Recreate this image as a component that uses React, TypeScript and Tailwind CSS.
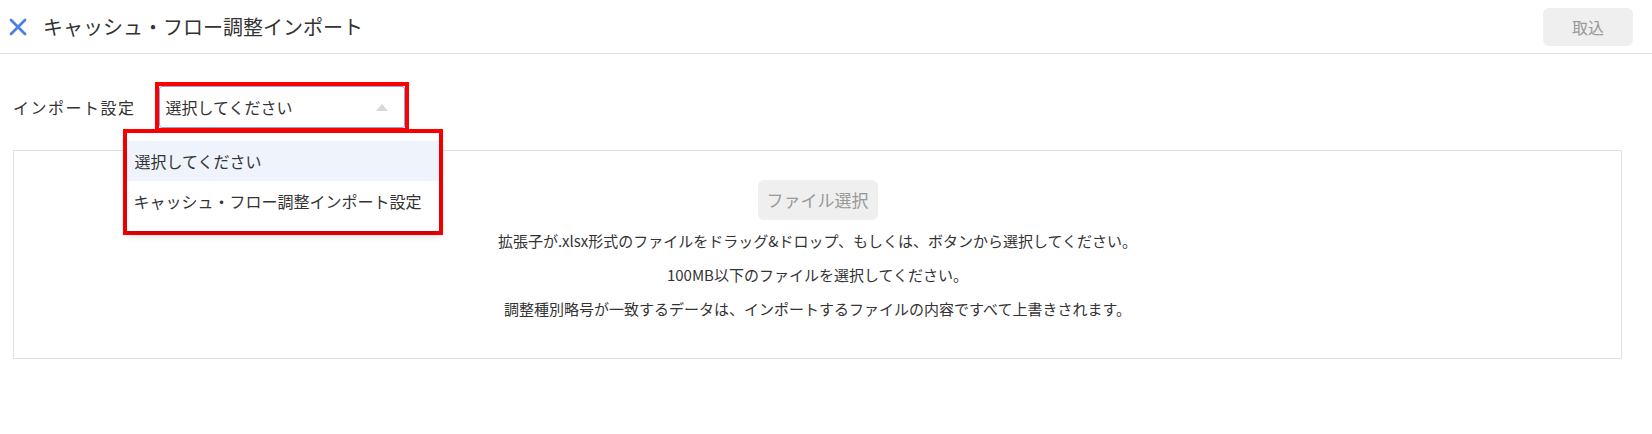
import React from 'react';

const font = { fontFamily: '"Noto Sans CJK JP", "Noto Sans", sans-serif' };

const lines = [
  '拡張子が.xlsx形式のファイルをドラッグ&ドロップ、もしくは、ボタンから選択してください。',
  '100MB以下のファイルを選択してください。',
  '調整種別略号が一致するデータは、インポートするファイルの内容ですべて上書きされます。',
];

const App = () => {
  return (
    <div className="w-[1652px] h-[434px] bg-white text-[#333]" style={font}>
      {/* Header */}
      <div className="flex h-[54px] items-center border-b border-[#e2e2e2] pl-[9px] pr-[19px]">
        <svg width="18" height="18" viewBox="0 0 18 18" className="shrink-0">
          <path d="M2 2 L16 16 M16 2 L2 16" stroke="#4d7fe3" strokeWidth="2.8" strokeLinecap="round" />
        </svg>
        <h1 className="ml-[16px] text-[20px] font-normal leading-none">キャッシュ・フロー調整インポート</h1>
        <button className="ml-auto h-[38px] w-[90px] rounded-[6px] bg-[#efefef] text-[16px] text-[#9a9a9a]">
          取込
        </button>
      </div>

      {/* Settings row */}
      <div className="flex items-center pl-[13px] pt-[28px]">
        <span className="text-[16px] tracking-[1.5px]">インポート設定</span>
        <div className="relative ml-[19px]">
          <div className="h-[50px] w-[254px] border-[4px] border-[#ff0000] bg-white">
            <div className="flex h-full items-center rounded-[3px] border border-[#8aa6e6] pl-[6px] pr-[16px]">
              <span className="text-[16px]">選択してください</span>
              <svg width="12" height="7" viewBox="0 0 12 7" className="ml-auto">
                <path d="M6 0 L12 7 L0 7 Z" fill="#d8d8d8" />
              </svg>
            </div>
          </div>
          {/* Dropdown */}
          <div className="absolute left-[-32px] top-[47px] z-10 w-[320px] border-[4px] border-[#ff0000]">
            <div className="bg-white pt-[8px] pb-[10px] shadow-[0_3px_8px_rgba(0,0,0,0.25)]">
              <div className="flex h-[40px] items-center bg-[#eff4fc] pl-[8px] text-[16px]">選択してください</div>
              <div className="flex h-[40px] items-center pl-[7px] text-[16px]">キャッシュ・フロー調整インポート設定</div>
            </div>
          </div>
        </div>
      </div>

      {/* Drop zone */}
      <div className="ml-[13px] mr-[30px] mt-[18px] flex h-[209px] flex-col items-center border border-[#e0e0e0] pt-[29px]">
        <button className="h-[40px] w-[120px] rounded-[6px] bg-[#efefef] text-[17px] text-[#999]">ファイル選択</button>
        <div className="mt-[11px] flex flex-col items-center gap-[14px] text-[15px] leading-[20px]">
          {lines.map((l) => (
            <p key={l}>{l}</p>
          ))}
        </div>
      </div>
    </div>
  );
};

export default App;
